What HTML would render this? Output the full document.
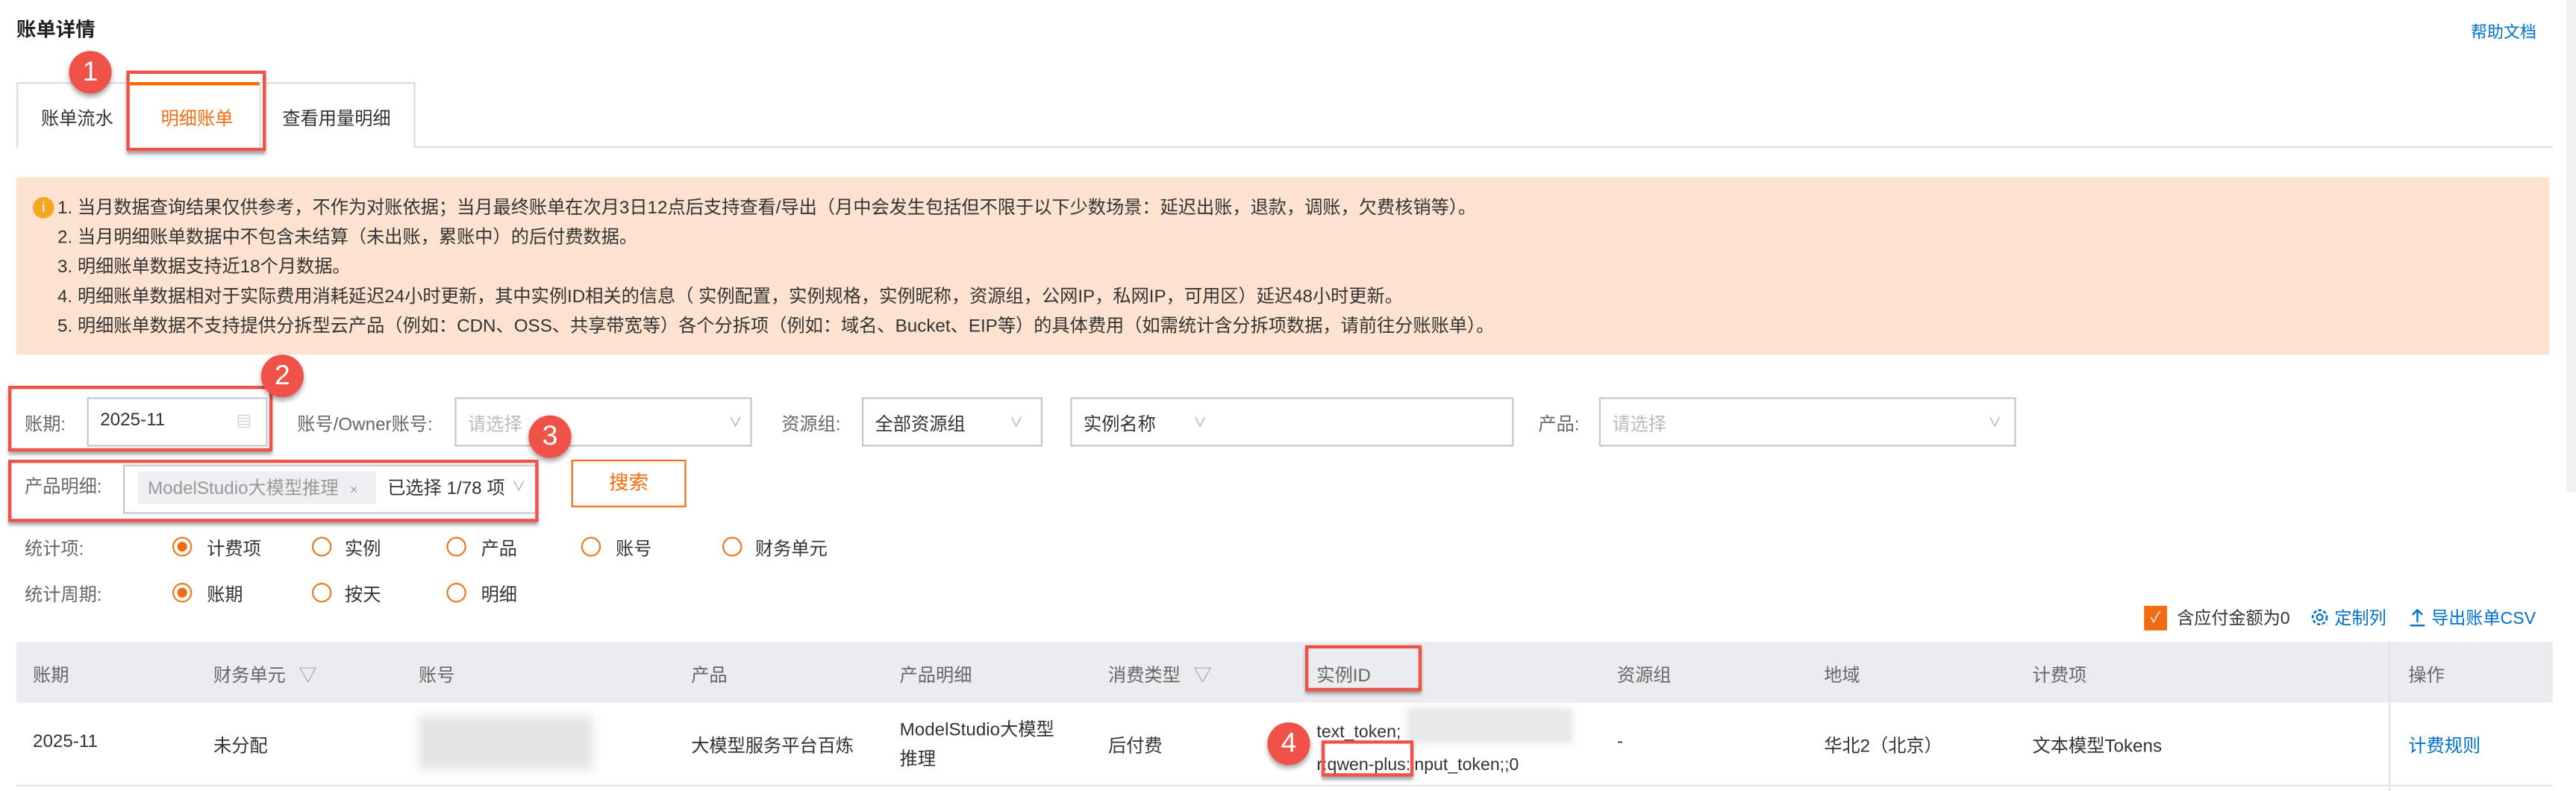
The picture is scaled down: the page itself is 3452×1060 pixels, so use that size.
<!DOCTYPE html>
<html><head><meta charset="utf-8"><style>
html,body{margin:0;padding:0;background:#fff;overflow:hidden;width:3452px;height:1060px}
#w{position:absolute;left:0;top:0;width:1569px;height:482px;transform:scale(2.2,2.2);transform-origin:0 0;font-family:"Liberation Sans","Noto Sans CJK SC",sans-serif;font-size:11px;color:#333}
.a{position:absolute;white-space:nowrap;font-size:11px}
.box{position:absolute;border:1px solid #c4c6cf;background:#fff;box-sizing:border-box}
.red{position:absolute;border:2px solid #f0524a;box-sizing:border-box;box-shadow:0 2px 2px rgba(0,0,0,.35)}
.badge{position:absolute;width:26px;height:26px;border-radius:50%;background:#f0524a;color:#fff;font-size:17px;text-align:center;line-height:26px;box-shadow:0 2px 3px rgba(0,0,0,.35)}
.chev{position:absolute;color:#aaa;font-size:8px}
.radio{position:absolute;width:12px;height:12px;border:1px solid #e87a1f;border-radius:50%;box-sizing:border-box;background:#fff}
.radio.on::after{content:"";position:absolute;left:2px;top:2px;width:6px;height:6px;border-radius:50%;background:#f26b10}
.blue{color:#0070cc}
.hd{color:#666}
</style></head><body><div id="w">
<div class="a" style="left:10px;top:9px;font-size:12px;font-weight:bold;color:#222">账单详情</div>
<div class="a blue" style="left:1505px;top:11px;font-size:10px">帮助文档</div>
<div style="position:absolute;left:1563px;top:0;width:6px;height:300px;background:#f2f2f2"></div>

<div style="position:absolute;left:10px;top:89px;width:1545px;height:1px;background:#ddd"></div>
<div style="position:absolute;left:10px;top:50px;width:243px;height:40px;border:1px solid #ddd;border-bottom:none;box-sizing:border-box;background:#fff"></div>
<div style="position:absolute;left:78px;top:50px;width:1px;height:40px;background:#ddd"></div>
<div style="position:absolute;left:158px;top:50px;width:1px;height:40px;background:#ddd"></div>
<div style="position:absolute;left:79px;top:50px;width:79px;height:2px;background:#ff6a00"></div>
<div class="a" style="left:25px;top:64px">账单流水</div>
<div class="a" style="left:98px;top:64px;color:#f26b10">明细账单</div>
<div class="a" style="left:172px;top:64px">查看用量明细</div>
<div class="red" style="left:77px;top:43px;width:85px;height:49px"></div>
<div class="badge" style="left:42px;top:31px">1</div>

<div style="position:absolute;left:10px;top:108px;width:1543px;height:108px;background:#fde3cf"></div>
<div style="position:absolute;left:20px;top:120px;width:13px;height:13px;border-radius:50%;background:#f5a623;color:#fff;font-size:9px;text-align:center;line-height:13px">i</div>
<div class="a" style="left:35px;top:118px;line-height:18px">1. 当月数据查询结果仅供参考，不作为对账依据；当月最终账单在次月3日12点后支持查看/导出（月中会发生包括但不限于以下少数场景：延迟出账，退款，调账，欠费核销等）。<br>2. 当月明细账单数据中不包含未结算（未出账，累账中）的后付费数据。<br>3. 明细账单数据支持近18个月数据。<br>4. 明细账单数据相对于实际费用消耗延迟24小时更新，其中实例ID相关的信息（ 实例配置，实例规格，实例昵称，资源组，公网IP，私网IP，可用区）延迟48小时更新。<br>5. 明细账单数据不支持提供分拆型云产品（例如：CDN、OSS、共享带宽等）各个分拆项（例如：域名、Bucket、EIP等）的具体费用（如需统计含分拆项数据，请前往分账账单）。</div>

<div class="a hd" style="left:15px;top:250px">账期:</div>
<div class="box" style="left:53px;top:242px;width:110px;height:30px"></div>
<div class="a" style="left:61px;top:250px">2025-11</div>
<div class="a" style="left:144px;top:250px;color:#bbb;font-size:9px">▤</div>
<div class="red" style="left:5px;top:235px;width:161px;height:40px"></div>
<div class="badge" style="left:159px;top:216px">2</div>

<div class="a hd" style="left:181px;top:250px">账号/Owner账号:</div>
<div class="box" style="left:277px;top:242px;width:181px;height:30px"></div>
<div class="a" style="left:285px;top:250px;color:#bbb">请选择</div>
<div class="chev" style="left:444px;top:252px">∨</div>
<div class="a hd" style="left:476px;top:250px">资源组:</div>
<div class="box" style="left:525px;top:242px;width:110px;height:30px"></div>
<div class="a" style="left:533px;top:250px">全部资源组</div>
<div class="chev" style="left:615px;top:252px">∨</div>
<div class="box" style="left:652px;top:242px;width:270px;height:30px"></div>
<div class="a" style="left:660px;top:250px">实例名称</div>
<div class="chev" style="left:727px;top:252px">∨</div>
<div class="a hd" style="left:937px;top:250px">产品:</div>
<div class="box" style="left:974px;top:242px;width:254px;height:30px"></div>
<div class="a" style="left:982px;top:250px;color:#bbb">请选择</div>
<div class="chev" style="left:1211px;top:252px">∨</div>
<div class="badge" style="left:322px;top:253px">3</div>

<div class="a hd" style="left:15px;top:288px">产品明细:</div>
<div class="box" style="left:75px;top:283px;width:252px;height:30px"></div>
<div style="position:absolute;left:84px;top:287px;width:145px;height:20px;background:#eeeff2"></div>
<div class="a" style="left:90px;top:289px;color:#999">ModelStudio大模型推理 <span style="font-size:8px;margin-left:4px">×</span></div>
<div class="a" style="left:236px;top:289px">已选择 1/78 项</div>
<div class="chev" style="left:312px;top:291px">∨</div>
<div class="red" style="left:5px;top:280px;width:323px;height:38px"></div>
<div style="position:absolute;left:348px;top:280px;width:70px;height:29px;border:1px solid #f26b10;box-sizing:border-box;color:#f26b10;font-size:12px;text-align:center;line-height:27px">搜索</div>

<div class="a hd" style="left:15px;top:326px">统计项:</div>
<div class="radio on" style="left:105px;top:327px"></div><div class="a" style="left:126px;top:326px">计费项</div>
<div class="radio" style="left:190px;top:327px"></div><div class="a" style="left:210px;top:326px">实例</div>
<div class="radio" style="left:272px;top:327px"></div><div class="a" style="left:293px;top:326px">产品</div>
<div class="radio" style="left:354px;top:327px"></div><div class="a" style="left:375px;top:326px">账号</div>
<div class="radio" style="left:440px;top:327px"></div><div class="a" style="left:460px;top:326px">财务单元</div>
<div class="a hd" style="left:15px;top:354px">统计周期:</div>
<div class="radio on" style="left:105px;top:355px"></div><div class="a" style="left:126px;top:354px">账期</div>
<div class="radio" style="left:190px;top:355px"></div><div class="a" style="left:210px;top:354px">按天</div>
<div class="radio" style="left:272px;top:355px"></div><div class="a" style="left:293px;top:354px">明细</div>

<div style="position:absolute;left:1306px;top:369px;width:14px;height:15px;background:#f26b10;color:#fff;font-size:9px;text-align:center;line-height:15px">✓</div>
<div class="a" style="left:1326px;top:369px;font-size:10.5px">含应付金额为0</div>
<svg style="position:absolute;left:1407px;top:370px" width="12" height="12" viewBox="0 0 12 12"><circle cx="6" cy="6" r="4.3" fill="none" stroke="#0070cc" stroke-width="1.2" stroke-dasharray="2 1.2"/><circle cx="6" cy="6" r="1.8" fill="none" stroke="#0070cc" stroke-width="1"/></svg>
<div class="a blue" style="left:1422px;top:369px;font-size:10.5px">定制列</div>
<svg style="position:absolute;left:1467px;top:370px" width="11" height="12" viewBox="0 0 11 12"><path d="M5.5 9V1.5M2.5 4.5l3-3 3 3M1 11h9" fill="none" stroke="#0070cc" stroke-width="1.1"/></svg>
<div class="a blue" style="left:1481px;top:369px;font-size:10.5px">导出账单CSV</div>

<div style="position:absolute;left:10px;top:391px;width:1545px;height:37px;background:#ebecef"></div>
<div style="position:absolute;left:1455px;top:391px;width:1px;height:91px;background:#e2e2e2"></div>
<div class="a hd" style="left:20px;top:403px">账期</div>
<div class="a hd" style="left:130px;top:403px">财务单元 <span style="color:#999;margin-left:5px">▽</span></div>
<div class="a hd" style="left:255px;top:403px">账号</div>
<div class="a hd" style="left:421px;top:403px">产品</div>
<div class="a hd" style="left:548px;top:403px">产品明细</div>
<div class="a hd" style="left:675px;top:403px">消费类型 <span style="color:#999;margin-left:5px">▽</span></div>
<div class="a hd" style="left:802px;top:403px">实例ID</div>
<div class="a hd" style="left:985px;top:403px">资源组</div>
<div class="a hd" style="left:1111px;top:403px">地域</div>
<div class="a hd" style="left:1238px;top:403px">计费项</div>
<div class="a hd" style="left:1467px;top:403px">操作</div>
<div class="red" style="left:795px;top:393px;width:71px;height:28px"></div>

<div style="position:absolute;left:10px;top:478px;width:1545px;height:1px;background:#e6e6e6"></div>
<div class="a" style="left:20px;top:446px">2025-11</div>
<div class="a" style="left:130px;top:446px">未分配</div>
<div style="position:absolute;left:255px;top:436px;width:106px;height:33px;background:#e4e4e4;filter:blur(3px)"></div>
<div class="a" style="left:421px;top:446px">大模型服务平台百炼</div>
<div class="a" style="left:548px;top:436px;line-height:18px">ModelStudio大模型<br>推理</div>
<div class="a" style="left:675px;top:446px">后付费</div>
<div class="a" style="left:802px;top:436px;line-height:20px;font-size:10.5px">text_token;<br>r:qwen-plus:input_token;;0</div>
<div style="position:absolute;left:857px;top:431px;width:101px;height:22px;background:#e8e8e8;filter:blur(2px)"></div>
<div class="red" style="left:805px;top:451px;width:56px;height:22px"></div>
<div class="badge" style="left:772px;top:440px">4</div>
<div class="a" style="left:985px;top:446px">-</div>
<div class="a" style="left:1111px;top:446px">华北2（北京）</div>
<div class="a" style="left:1238px;top:446px">文本模型Tokens</div>
<div class="a blue" style="left:1467px;top:446px">计费规则</div>
</div></body></html>
